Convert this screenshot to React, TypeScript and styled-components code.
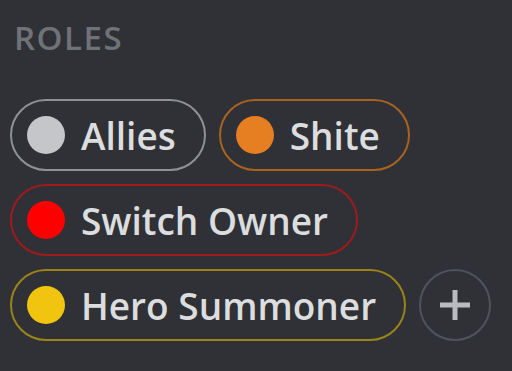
import React from "react";
import styled, { createGlobalStyle } from "styled-components";

const Global = createGlobalStyle`
  html, body { margin: 0; padding: 0; background: #2f3136; }
  body { width: 512px; height: 371px; overflow: hidden; }
`;

const Panel = styled.div`
  box-sizing: border-box;
  width: 500px;
  padding: 17px 0 0 10px;
  font-family: "Open Sans", "Noto Sans", sans-serif;
`;

const Heading = styled.h2`
  margin: 0 0 0 4px;
  font-size: 33px;
  line-height: 42px;
  font-weight: 600;
  letter-spacing: 1.5px;
  color: #6f7378;
  text-transform: uppercase;
`;

const RoleList = styled.div`
  display: flex;
  flex-wrap: wrap;
  gap: 13px 13px;
  margin-top: 40px;
`;

const Pill = styled.div<{ $border: string }>`
  box-sizing: border-box;
  height: 72px;
  display: flex;
  align-items: center;
  gap: 16px;
  padding: 0 28px 0 15px;
  border: 2px solid ${(p) => p.$border};
  border-radius: 36px;
`;

const Dot = styled.span<{ $color: string }>`
  width: 38px;
  height: 38px;
  border-radius: 50%;
  background: ${(p) => p.$color};
  flex-shrink: 0;
`;

const Name = styled.span`
  font-size: 37px;
  font-weight: 600;
  color: #dcddde;
  line-height: 1;
  white-space: nowrap;
`;

const AddButton = styled.button`
  box-sizing: border-box;
  width: 72px;
  height: 72px;
  border-radius: 50%;
  border: 2px solid #4f545c;
  background: transparent;
  display: flex;
  align-items: center;
  justify-content: center;
  padding: 0;
`;

const roles = [
  { name: "Allies", color: "#c4c6c9", border: "#8e9297" },
  { name: "Shite", color: "#e67e22", border: "#a8631f" },
  { name: "Switch Owner", color: "#ff0000", border: "#a01a1e" },
  { name: "Hero Summoner", color: "#f1c40f", border: "#9a8418" },
];

export default function App() {
  return (
    <>
      <Global />
      <Panel>
        <Heading>Roles</Heading>
        <RoleList>
          {roles.map((r) => (
            <Pill key={r.name} $border={r.border}>
              <Dot $color={r.color} />
              <Name>{r.name}</Name>
            </Pill>
          ))}
          <AddButton aria-label="Add role">
            <svg width="34" height="34" viewBox="0 0 34 34">
              <path d="M17 2v30M2 17h30" stroke="#b9bbbe" strokeWidth="5" />
            </svg>
          </AddButton>
        </RoleList>
      </Panel>
    </>
  );
}
